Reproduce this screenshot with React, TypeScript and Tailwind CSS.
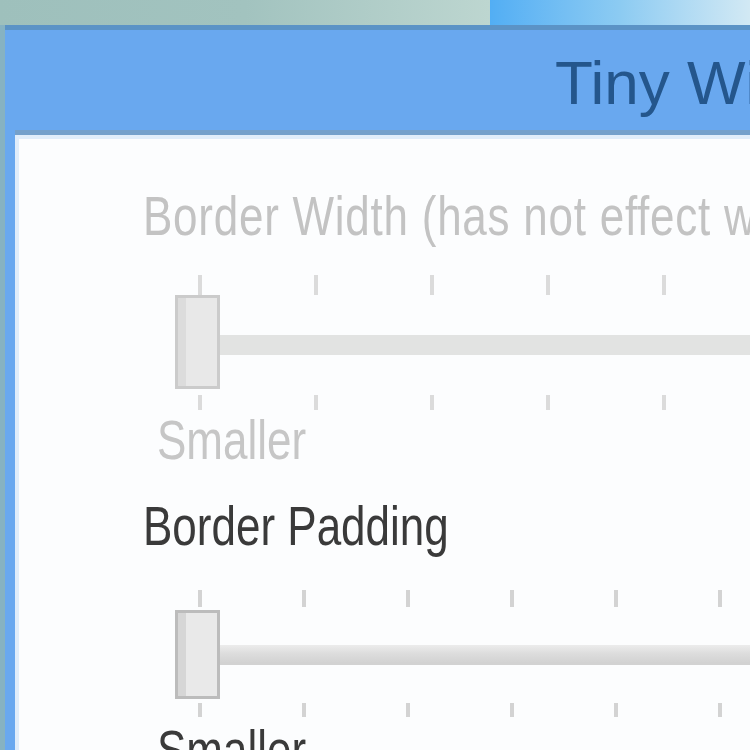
import React from "react";

type SliderProps = {
  ticks: number;
  tickRowTop: string;
  tickRowBottom: string;
  thumbRow: string;
  thumb: string;
  thumbInner: string;
  track: string;
  tick: string;
};

const disabledSlider: SliderProps = {
  ticks: 5,
  tickRowTop: "flex gap-[112px] pl-[23px] h-[20px]",
  tickRowBottom: "flex gap-[112px] pl-[23px] h-[15px] mt-[6px]",
  thumbRow: "flex h-[94px]",
  thumb: "w-[45px] h-full shrink-0 border-[3px] border-[#cbcbcb] bg-[#e8e8e8] flex",
  thumbInner: "w-[8px] h-full bg-[#dcdcdc]",
  track: "flex-1 h-[20px] mt-[40px] bg-[#e2e3e2]",
  tick: "w-[4px] h-full shrink-0 bg-[#dbdbdb]",
};

const paddingSlider: SliderProps = {
  ticks: 6,
  tickRowTop: "flex gap-[100px] pl-[23px] h-[17px]",
  tickRowBottom: "flex gap-[100px] pl-[23px] h-[14px] mt-[4px]",
  thumbRow: "flex h-[89px] mt-[3px]",
  thumb: "w-[45px] h-full shrink-0 border-[3px] border-[#bcbcbc] bg-[#e9e9e9] flex",
  thumbInner: "w-[8px] h-full bg-[#d6d6d6]",
  track:
    "flex-1 h-[20px] mt-[35px] bg-gradient-to-b from-[#ececec] via-[#dddddd] to-[#d3d3d3] border-b-[3px] border-[#d2d2d2]",
  tick: "w-[4px] h-full shrink-0 bg-[#d3d3d3]",
};

function Slider({ s }: { s: SliderProps }) {
  const list = Array.from({ length: s.ticks }, (_, i) => i);
  return (
    <div className="ml-[156px] flex flex-col">
      <div className={s.tickRowTop}>
        {list.map((i) => (
          <span key={i} className={s.tick} />
        ))}
      </div>
      <div className={s.thumbRow}>
        <div className={s.thumb}>
          <div className={s.thumbInner} />
        </div>
        <div className={s.track} />
      </div>
      <div className={s.tickRowBottom}>
        {list.map((i) => (
          <span key={i} className={s.tick} />
        ))}
      </div>
    </div>
  );
}

const label =
  "h-[44px] text-[44px] leading-[44px] whitespace-nowrap origin-center scale-y-[1.26]";

export default function App() {
  return (
    <div className="w-[750px] h-[750px] overflow-hidden flex flex-col bg-[#8ab6c4] font-['Liberation_Sans',Arial,sans-serif]">
      {/* ── desktop behind the window ── */}
      <div className="h-[25px] flex shrink-0">
        <div className="w-[490px] shrink-0 bg-gradient-to-r from-[#9ec0bc] via-[#a2c3bf] to-[#bdd6d0]" />
        <div className="flex-1 bg-gradient-to-r from-[#52aef4] via-[#8ccbf2] to-[#d2e9f4]" />
      </div>

      <div className="flex flex-1 min-h-0">
        <div className="w-[5px] shrink-0 bg-[#86b2c2]" />

        {/* ── window ── */}
        <div className="flex-1 min-w-0 flex flex-col border-t-[5px] border-[#5b93c6] bg-[#69a8ef] pl-[10px]">
          {/* Title bar */}
          <div className="h-[100px] shrink-0 pl-[540px] pt-[22px] overflow-hidden">
            <div className="text-[62px] leading-[62px] text-[#24568c] whitespace-nowrap">
              Tiny Window Settings
            </div>
          </div>

          {/* Body */}
          <div className="flex-1 border-t-[5px] border-[#74a0cb]">
            <div className="h-full border-t-[4px] border-l-[4px] border-[#e0edfa] bg-[#fcfdfe] flex flex-col pt-[55px] overflow-hidden">
              <div className={`${label} ml-[124px] tracking-[0.75px] text-[#c3c3c3]`}>
                Border Width (has not effect when border is hidden)
              </div>

              <div className="mt-[37px]">
                <Slider s={disabledSlider} />
              </div>

              <div className={`${label} ml-[138px] mt-[8px] text-[#c6c6c6]`}>Smaller</div>

              <div className={`${label} ml-[124px] mt-[42px] text-[#3a3a3a]`}>Border Padding</div>

              <div className="mt-[42px]">
                <Slider s={paddingSlider} />
              </div>

              <div className={`${label} ml-[138px] mt-[11px] text-[#3a3a3a]`}>Smaller</div>
            </div>
          </div>
        </div>
      </div>
    </div>
  );
}
